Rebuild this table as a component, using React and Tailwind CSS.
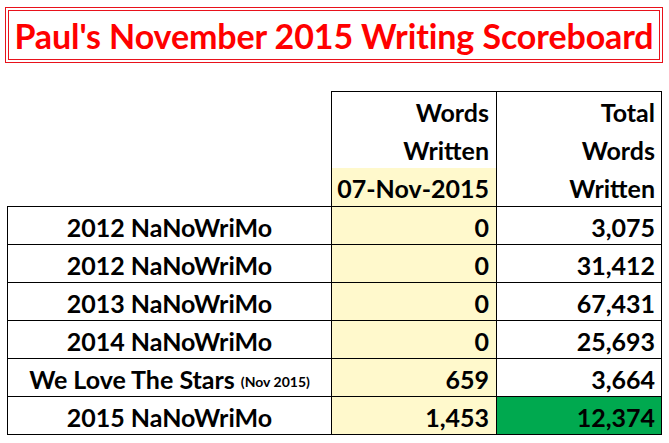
import React from 'react';

const rows = [
  { label: '2012 NaNoWriMo', today: '0', total: '3,075' },
  { label: '2012 NaNoWriMo', today: '0', total: '31,412' },
  { label: '2013 NaNoWriMo', today: '0', total: '67,431' },
  { label: '2014 NaNoWriMo', today: '0', total: '25,693' },
  { label: 'We Love The Stars', note: '(Nov 2015)', today: '659', total: '3,664' },
  { label: '2015 NaNoWriMo', today: '1,453', total: '12,374', done: true },
];

const ScoreRow = ({ row, last }) => (
  <div className="flex h-[38px] text-[25px] leading-none">
    <div
      className={`w-[324px] flex items-center justify-center pt-[4px] border-l border-t border-black ${last ? 'border-b h-[39px]' : ''}`}
    >
      <span>{row.label}</span>
      {row.note && <span className="ml-[6px] text-[14px] pt-[4px]">{row.note}</span>}
    </div>
    <div
      className={`w-[165px] flex items-center justify-end pr-[7px] pt-[4px] bg-[#fff9cc] border-l border-t border-black ${last ? 'border-b h-[39px]' : ''}`}
    >
      {row.today}
    </div>
    <div
      className={`w-[166px] flex items-center justify-end pr-[6px] pt-[4px] border-l border-t border-r border-black ${row.done ? 'bg-[#00a94f]' : ''} ${last ? 'border-b h-[39px]' : ''}`}
    >
      {row.total}
    </div>
  </div>
);

export default function App() {
  return (
    <div className="w-[669px] h-[443px] bg-white overflow-hidden font-[Lato,'Liberation_Sans',sans-serif] font-bold text-black">
      <div className="ml-[5px] mt-[7px] w-[658px] h-[56px] border border-[#e8121b] p-[2px]">
        <div className="w-full h-full border border-[#e8121b] flex items-center justify-center pt-[2px]">
          <h1 className="text-[34px] leading-none text-[#ff0000] tracking-[-0.1px]">
            Paul's November 2015 Writing Scoreboard
          </h1>
        </div>
      </div>

      <div className="ml-[7px] mt-[28px]">
        <div className="flex h-[115px] text-[25px] leading-none">
          <div className="w-[324px]" />
          <div className="w-[165px] flex flex-col border-l border-t border-black">
            <div className="h-[38px] flex items-center justify-end pr-[7px] pt-[2px]">Words</div>
            <div className="h-[38px] flex items-center justify-end pr-[7px] pt-[2px]">Written</div>
            <div className="flex-1 flex items-center justify-end pr-[7px] pt-[2px] bg-[#fff9cc]">07-Nov-2015</div>
          </div>
          <div className="w-[166px] flex flex-col border-l border-t border-r border-black">
            <div className="h-[38px] flex items-center justify-end pr-[6px] pt-[2px]">Total</div>
            <div className="h-[38px] flex items-center justify-end pr-[6px] pt-[2px]">Words</div>
            <div className="flex-1 flex items-center justify-end pr-[6px] pt-[2px]">Written</div>
          </div>
        </div>
        {rows.map((row, i) => (
          <ScoreRow key={i} row={row} last={i === rows.length - 1} />
        ))}
      </div>
    </div>
  );
}
